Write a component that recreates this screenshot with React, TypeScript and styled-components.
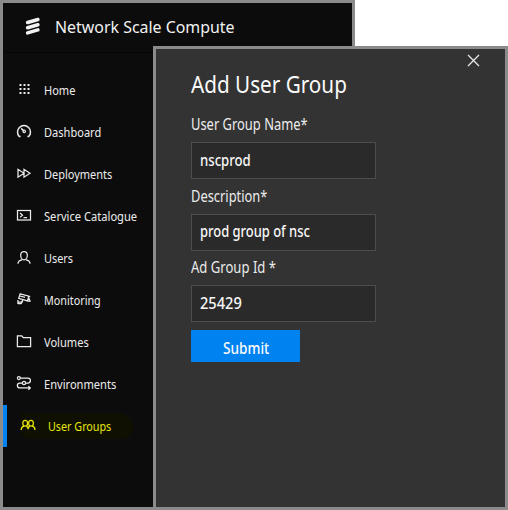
import React, { useLayoutEffect, useRef, useState } from "react";
import styled, { createGlobalStyle } from "styled-components";

const GlobalStyle = createGlobalStyle`
  * { box-sizing: border-box; }
  body { margin: 0; background: #fff; font-family: "Noto Sans", sans-serif; }
`;

const Stage = styled.div`
  position: relative;
  width: 508px;
  height: 510px;
  overflow: hidden;
`;

const AppWindow = styled.div`
  width: 355px;
  height: 510px;
  border: 3px solid #8b8b8b;
  background: #0c0c0c;
`;

const Header = styled.header`
  display: flex;
  align-items: center;
  height: 50px;
  padding: 0 0 2px 22px;
  gap: 14px;
  border-bottom: 1px solid #050505;
  color: #f2f2f2;
  font-size: 16px;
  line-height: 22px;
`;

const Sidebar = styled.nav`
  display: flex;
  flex-direction: column;
  padding-top: 16px;
  width: 150px;
`;

const NavItem = styled.a<{ $active?: boolean }>`
  display: flex;
  align-items: center;
  height: 42px;
  padding-left: ${(p) => (p.$active ? 9 : 13)}px;
  border-left: ${(p) => (p.$active ? "4px solid #0082f0" : "0")};
  color: ${(p) => (p.$active ? "#e6e60c" : "#ececec")};
  font-size: 12.8px;
  line-height: 18px;
`;

const Highlight = styled.span<{ $active?: boolean }>`
  display: flex;
  align-items: center;
  gap: 12px;
  height: 26px;
  width: 113px;
  margin-left: ${(p) => (p.$active ? "4px" : "0")};
  border-radius: 6px 14px 12px 10px;
  background: ${(p) => (p.$active ? "#101002" : "transparent")};
`;

const Glyph = styled.svg`
  flex: none;
  display: block;
  fill: none;
  stroke: currentColor;
  stroke-width: 1.25;
  overflow: visible;
`;

const FitBox = styled.span<{ $width: number }>`
  display: block;
  width: ${(p) => p.$width}px;
  white-space: nowrap;
`;

const FitInner = styled.span`
  display: inline-block;
  transform-origin: 0 50%;
`;

const Panel = styled.section`
  position: absolute;
  left: 153px;
  top: 46px;
  width: 355px;
  height: 464px;
  border: 3px solid #8b8b8b;
  background: #333;
  padding: 0 0 0 35px;
`;

const PanelBar = styled.div`
  display: flex;
  justify-content: flex-end;
  height: 19px;
  padding: 5px 25px 0 0;
  color: #e8e8e8;
`;

const Title = styled.h1`
  margin: 0;
  height: 46px;
  font-size: 24px;
  line-height: 31px;
  font-weight: 400;
  color: #fafafa;
`;

const Form = styled.div`
  display: flex;
  flex-direction: column;
  align-items: flex-start;
`;

const Field = styled.label`
  display: flex;
  flex-direction: column;
  height: 71.5px;
  color: #ececec;
  font-size: 16px;
  line-height: 20px;
`;

const InputBox = styled.span`
  display: flex;
  align-items: center;
  width: 185px;
  height: 37px;
  margin-top: 8px;
  padding: 0 0 2px 8px;
  border: 1px solid #4d4d4d;
  background: #2a2a2a;
  color: #f7f7f7;
  font-size: 16px;
  font-weight: 500;
`;

const SubmitButton = styled.button`
  display: flex;
  align-items: center;
  justify-content: center;
  width: 109px;
  height: 32px;
  margin-top: 1px;
  padding: 4px 0 0;
  border: 0;
  background: #0082f0;
  color: #fafafa;
  font: 500 16px/20px "Noto Sans", sans-serif;
`;

/* Condenses or widens a line of text to an exact width. */
function Fit({ width, children }: { width: number; children: string }) {
  const ref = useRef<HTMLSpanElement>(null);
  const [scale, setScale] = useState(1);
  useLayoutEffect(() => {
    if (ref.current) setScale(width / ref.current.offsetWidth);
  }, [width, children]);
  return (
    <FitBox $width={width}>
      <FitInner ref={ref} style={{ transform: `scaleX(${scale})` }}>{children}</FitInner>
    </FitBox>
  );
}

const dots = [3.5, 7.5, 11.5];

const icons: Record<string, React.ReactNode> = {
  home: dots.flatMap((y) =>
    dots.map((x) => <rect key={`${x}-${y}`} x={x} y={y - 1.5} width="2" height="2" fill="currentColor" stroke="none" />)
  ),
  dashboard: (
    <>
      <path d="M4.6 12.6H3.3A6.5 6.5 0 1 1 12.7 12.6H11.4" strokeWidth="1.5" />
      <path d="M5.2 4.4 7.8 7" strokeWidth="1.5" />
      <circle cx="8.2" cy="7.4" r="1.2" />
    </>
  ),
  deployments: <path d="M2 3.3V11.2L8 7.25ZM8 3.3V11.2L14 7.25Z" />,
  catalogue: (
    <>
      <rect x="1.5" y="2.5" width="13" height="9.5" />
      <path d="M4 5 6.5 7.2 4 9.4M7.5 9.6H11" />
    </>
  ),
  users: (
    <>
      <path d="M4.7 5.2C4.7 2.7 6 1.5 8 1.5S11.3 2.7 11.3 5.2C11.3 7.7 9.9 9.8 8 9.8S4.7 7.7 4.7 5.2Z" />
      <path d="M2 13.7C2 11.4 3.4 10.3 6.1 9.9M9.9 9.9C12.6 10.3 14 11.4 14 13.7" />
    </>
  ),
  monitoring: (
    <>
      <path d="M4.2 1.8 12.9 4.2 11.4 8.9 2.7 6.4ZM4 4 9 5.4M11.8 4.8 14.2 4.6M11.5 8.8 14 9.1 12.8 6.1" />
      <path d="M6.7 7.7 5.8 10H2.1M1.9 8V12.1M2 11.6H5L6.9 9.2" />
    </>
  ),
  volumes: <path d="M1.4 12.6V1.8H5.8L7.3 3.6H14.6V12.6Z" />,
  environments: (
    <>
      <circle cx="2.9" cy="2.1" r="1.5" />
      <circle cx="8" cy="7" r="1.6" />
      <path d="M4.4 2.1H12A2.45 2.45 0 0 1 12 7H9.6M6.4 7H3.8A2.45 2.45 0 0 0 3.8 11.9H14M12.4 10.1 14.3 11.9 12.4 13.7" />
    </>
  ),
  groups: (
    <>
      <ellipse cx="5.2" cy="5.2" rx="2.4" ry="2.9" />
      <ellipse cx="11" cy="5.2" rx="2.4" ry="2.9" />
      <path d="M1.2 11.9C1.2 9.8 2 8.7 4 8.2M6.3 8.2C7.5 8.7 8.1 9.4 8.1 11.2M9.9 8.2C8.7 8.7 8.1 9.4 8.1 11.2M12.2 8.2C14.2 8.7 15 9.8 15 11.9" />
    </>
  ),
};

const items: { icon: string; label: string; width: number; active?: boolean }[] = [
  { icon: "home", label: "Home", width: 31 },
  { icon: "dashboard", label: "Dashboard", width: 57 },
  { icon: "deployments", label: "Deployments", width: 68.5 },
  { icon: "catalogue", label: "Service Catalogue", width: 93 },
  { icon: "users", label: "Users", width: 29 },
  { icon: "monitoring", label: "Monitoring", width: 56.5 },
  { icon: "volumes", label: "Volumes", width: 45 },
  { icon: "environments", label: "Environments", width: 72 },
  { icon: "groups", label: "User Groups", width: 63, active: true },
];

const fields = [
  { label: "User Group Name*", labelWidth: 117, value: "nscprod", valueWidth: 51 },
  { label: "Description*", labelWidth: 76.5, value: "prod group of nsc", valueWidth: 110 },
  { label: "Ad Group Id *", labelWidth: 85, value: "25429", valueWidth: 42 },
];

export default function App() {
  return (
    <Stage>
      <GlobalStyle />
      <AppWindow>
        <Header>
          <Glyph width="16" height="18" viewBox="0 0 16 18">
            <path d="M2.6 4.5 12.9 1.5M2.6 9.7 12.9 6.7M2.6 14.9 12.9 11.9" strokeWidth="3.5" strokeLinecap="round" />
          </Glyph>
          <Fit width={180}>Network Scale Compute</Fit>
        </Header>
        <Sidebar>
          {items.map((item) => (
            <NavItem key={item.icon} $active={item.active}>
              <Highlight $active={item.active}>
                <Glyph width="16" height="16" viewBox="0 0 16 16">{icons[item.icon]}</Glyph>
                <Fit width={item.width}>{item.label}</Fit>
              </Highlight>
            </NavItem>
          ))}
        </Sidebar>
      </AppWindow>
      <Panel>
        <PanelBar>
          <Glyph width="13" height="13" viewBox="0 0 13 13">
            <path d="M1 1 12 12M12 1 1 12" strokeWidth="1.3" />
          </Glyph>
        </PanelBar>
        <Title><Fit width={156}>Add User Group</Fit></Title>
        <Form>
          {fields.map((f) => (
            <Field key={f.label}>
              <Fit width={f.labelWidth}>{f.label}</Fit>
              <InputBox><Fit width={f.valueWidth}>{f.value}</Fit></InputBox>
            </Field>
          ))}
          <SubmitButton><Fit width={46}>Submit</Fit></SubmitButton>
        </Form>
      </Panel>
    </Stage>
  );
}
